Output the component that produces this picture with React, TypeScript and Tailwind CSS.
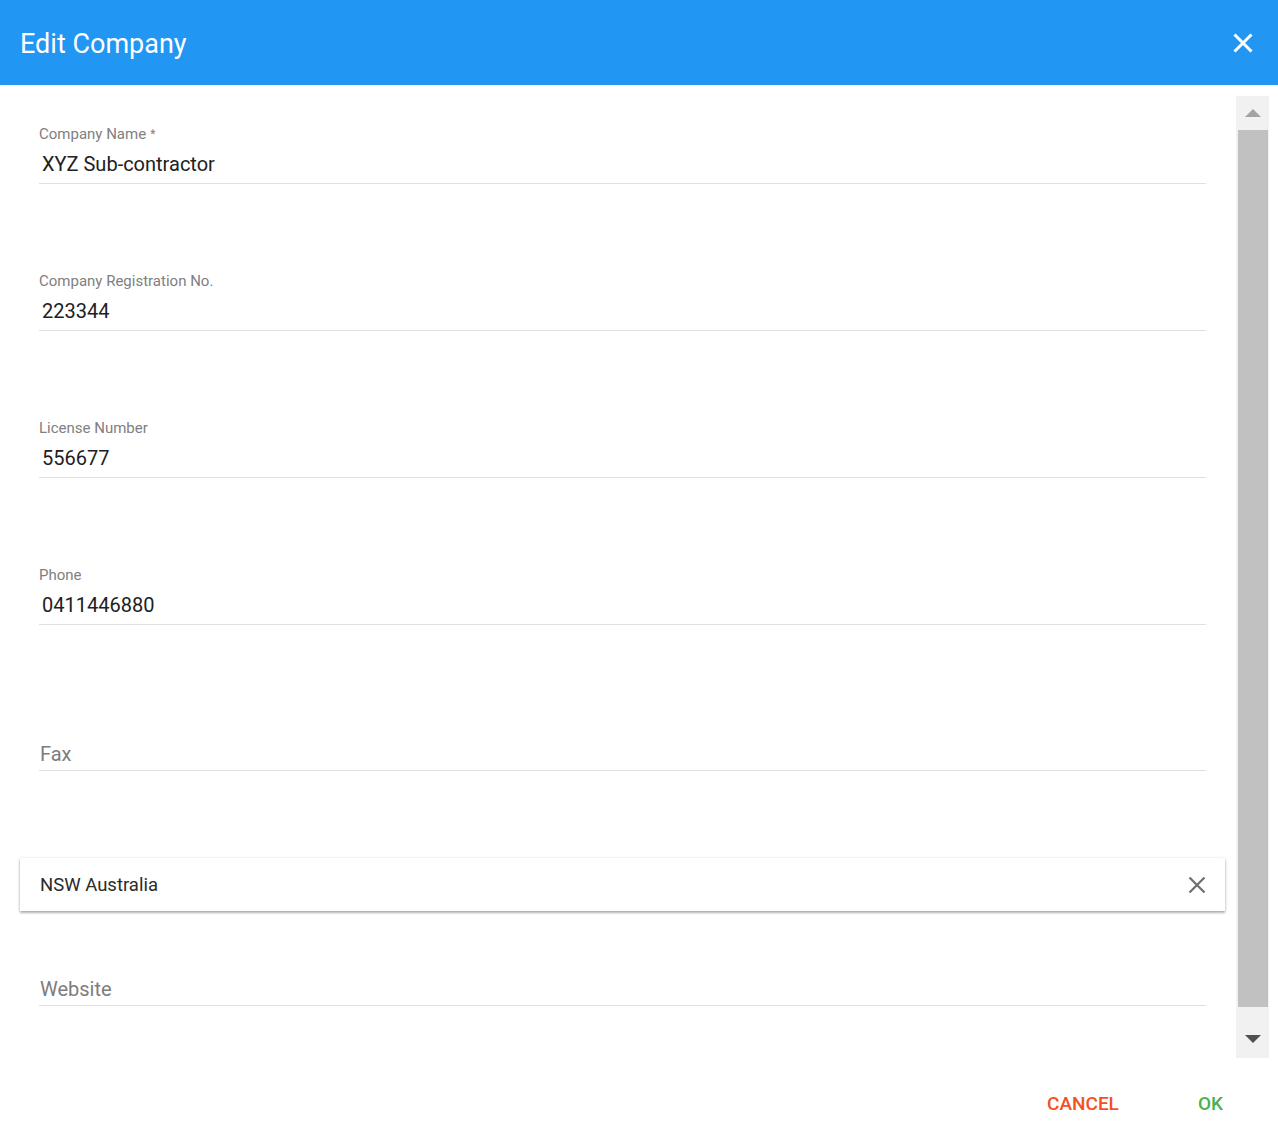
import * as React from 'react'

const FONT = { fontFamily: 'Roboto, "Noto Sans", Arial, sans-serif' }

const FIELDS: { label: string; value?: string; required?: boolean }[] = [
  { label: 'Company Name', value: 'XYZ Sub-contractor', required: true },
  { label: 'Company Registration No.', value: '223344' },
  { label: 'License Number', value: '556677' },
  { label: 'Phone', value: '0411446880' },
  { label: 'Fax' },
]

const TextField: React.FC<{ label: string; value?: string; required?: boolean }> = ({
  label,
  value,
  required,
}) => {
  const filled = !!value
  return (
    <div className="flex flex-col">
      <div className="h-[16px] text-[15px] leading-[16px] text-[#808080]">
        {filled ? (
          <span>
            {label}
            {required && <span className="ml-[4px] text-[12px] align-top">*</span>}
          </span>
        ) : null}
      </div>
      {filled ? (
        <div className="pt-[7px] pb-[4px] border-b border-[#e0e0e0]">
          <span className="block pl-[3px] text-[20px] leading-[30px] text-[#212121]">
            {value}
          </span>
        </div>
      ) : (
        <div className="pt-[10px] pb-[1px] border-b border-[#e0e0e0]">
          <span className="block pl-[1px] text-[20px] leading-[30px] text-[#7d7d7d]">
            {label}
          </span>
        </div>
      )}
    </div>
  )
}

const Scrollbar: React.FC = () => (
  <div className="mt-[11px] w-[33px] h-[962px] bg-[#f1f1f1] flex flex-col items-center">
    <div className="h-[34px] w-full flex items-center justify-center">
      <svg width="16" height="8" viewBox="0 0 16 8">
        <polygon points="0,8 16,8 8,0" fill="#a3a3a3" />
      </svg>
    </div>
    <div className="w-[30px] flex-1 bg-[#c1c1c1]" />
    <div className="h-[51px] w-full flex items-start justify-center pt-[28px]">
      <svg width="16" height="8" viewBox="0 0 16 8">
        <polygon points="0,0 16,0 8,8" fill="#505050" />
      </svg>
    </div>
  </div>
)

const App: React.FC = () => {
  return (
    <div className="w-[1278px] h-[1136px] bg-white flex flex-col" style={FONT}>
      <header className="h-[85px] bg-[#2196f3] flex items-center justify-between pl-[20px] pr-[25px]">
        <h1 className="pt-[3px] text-[27px] text-white font-normal leading-none">Edit Company</h1>
        <svg width="20" height="20" viewBox="0 0 20 20" className="mt-[1px]">
          <path d="M1.5 1.5 L18.5 18.5 M18.5 1.5 L1.5 18.5" stroke="#fff" strokeWidth="3" />
        </svg>
      </header>

      <div className="flex h-[975px] pr-[9px]">
        <div className="flex-1 pl-[39px] pr-[30px] pt-[41px] flex flex-col">
          {FIELDS.map((field, i) => (
            <div key={field.label} className={i === 0 ? '' : i === 4 ? 'mt-[88px]' : 'mt-[89px]'}>
              <TextField {...field} />
            </div>
          ))}

          <div className="mt-[87px] mx-[-19px] h-[53px] bg-white flex items-center justify-between pl-[20px] pr-[19px] shadow-[0_1px_3px_rgba(0,0,0,0.25),0_2px_2px_rgba(0,0,0,0.18)]">
            <span className="pt-[2px] text-[18.5px] text-[#2b2b2b]">NSW Australia</span>
            <svg width="18" height="18" viewBox="0 0 18 18">
              <path d="M1.5 1.5 L16.5 16.5 M16.5 1.5 L1.5 16.5" stroke="#6e6e6e" strokeWidth="2.2" />
            </svg>
          </div>

          <div className="mt-[37px]">
            <TextField label="Website" />
          </div>
        </div>
        <Scrollbar />
      </div>

      <footer className="flex-1 flex items-start justify-end pt-[33px] pr-[55px] gap-[79px]">
        <button className="text-[19px] font-medium text-[#f4511e] leading-[22px]">CANCEL</button>
        <button className="text-[19px] font-medium text-[#4caf50] leading-[22px]">OK</button>
      </footer>
    </div>
  )
}

export default App
